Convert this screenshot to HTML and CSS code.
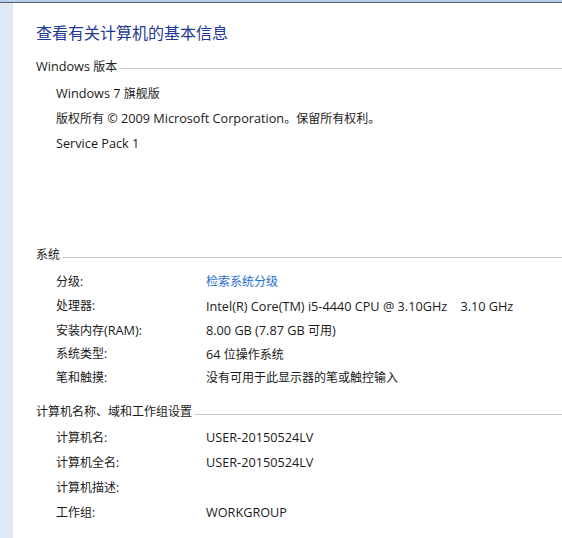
FILE: index.html
```html
<!DOCTYPE html>
<html>
<head>
<meta charset="utf-8">
<link rel="stylesheet" href="styles.css">
</head>
<body>
<div class="topbar"></div>
<div class="window">
  <div class="strip"></div>
  <div class="main">
    <h1 class="title">查看有关计算机的基本信息</h1>

    <div class="heading"><span class="htext"><span class="en">Windows </span>版本</span><i class="rule"></i></div>
    <div class="plain">
      <div class="row"><span class="en">Windows 7 </span>旗舰版</div>
      <div class="row">版权所有 <span class="en">© 2009 Microsoft Corporation</span>。保留所有权利。</div>
      <div class="row"><span class="en">Service Pack 1</span></div>
    </div>

    <div class="heading system"><span class="htext">系统</span><i class="rule"></i></div>
    <div class="table sys">
      <div class="row"><span class="label">分级:</span><a class="link">检索系统分级</a></div>
      <div class="row"><span class="label">处理器:</span><span class="en">Intel(R) Core(TM) i5-4440 CPU @ 3.10GHz&nbsp;&nbsp;&nbsp; 3.10 GHz</span></div>
      <div class="row"><span class="label">安装内存<span class="en">(RAM)</span>:</span><span><span class="en">8.00 GB (7.87 GB </span>可用<span class="en">)</span></span></div>
      <div class="row"><span class="label">系统类型:</span><span><span class="en">64 </span>位操作系统</span></div>
      <div class="row"><span class="label">笔和触摸:</span><span>没有可用于此显示器的笔或触控输入</span></div>
    </div>

    <div class="heading"><span class="htext">计算机名称、域和工作组设置</span><i class="rule"></i></div>
    <div class="table name">
      <div class="row"><span class="label">计算机名:</span><span class="en">USER-20150524LV</span></div>
      <div class="row"><span class="label">计算机全名:</span><span class="en">USER-20150524LV</span></div>
      <div class="row"><span class="label">计算机描述:</span><span></span></div>
      <div class="row"><span class="label">工作组:</span><span class="en">WORKGROUP</span></div>
    </div>
  </div>
</div>
</body>
</html>
```
FILE: styles.css
```css
html, body {
  margin: 0;
  padding: 0;
  background: #fff;
  height: 100%;
  overflow: hidden;
}
body {
  font-family: "Open Sans", "Noto Sans CJK SC", sans-serif;
  font-size: 12px;
  color: #1a1a1a;
}
.en {
  font-size: 12.7px;
}
.topbar {
  height: 3px;
  background: linear-gradient(to bottom, #c4d6ee 0, #a9c3e6 2px, #5a6270 2px, #5a6270 3px);
}
.window {
  display: flex;
  height: 535px;
}
.strip {
  width: 13px;
  flex: none;
  background: #dfe8f5;
}
.main {
  flex: 1;
  padding-left: 23px;
  padding-top: 19px;
}
.title {
  margin: 0;
  font-weight: normal;
  font-size: 16px;
  line-height: 22px;
  color: #1e3996;
}
.heading {
  display: flex;
  align-items: center;
  line-height: 18px;
  height: 18px;
  margin-top: 13px;
}
.heading .htext {
  flex: none;
  padding-right: 2px;
}
.heading .rule {
  flex: 1;
  height: 1px;
  background: #c9c9c9;
  margin-top: 5px;
}
.heading.system {
  margin-top: 90px;
}
.plain {
  padding-left: 20px;
  margin-top: 6px;
}
.plain .row {
  line-height: 25px;
  height: 25px;
}
.table {
  padding-left: 20px;
}
.table .row {
  display: flex;
  line-height: 24px;
  height: 24px;
}
.table .label {
  width: 150px;
  flex: none;
}
.sys {
  margin-top: 6px;
}
.name {
  margin-top: 4px;
}
.name .row {
  line-height: 25px;
  height: 25px;
}
.link {
  color: #1f6fd1;
  cursor: pointer;
}
```
